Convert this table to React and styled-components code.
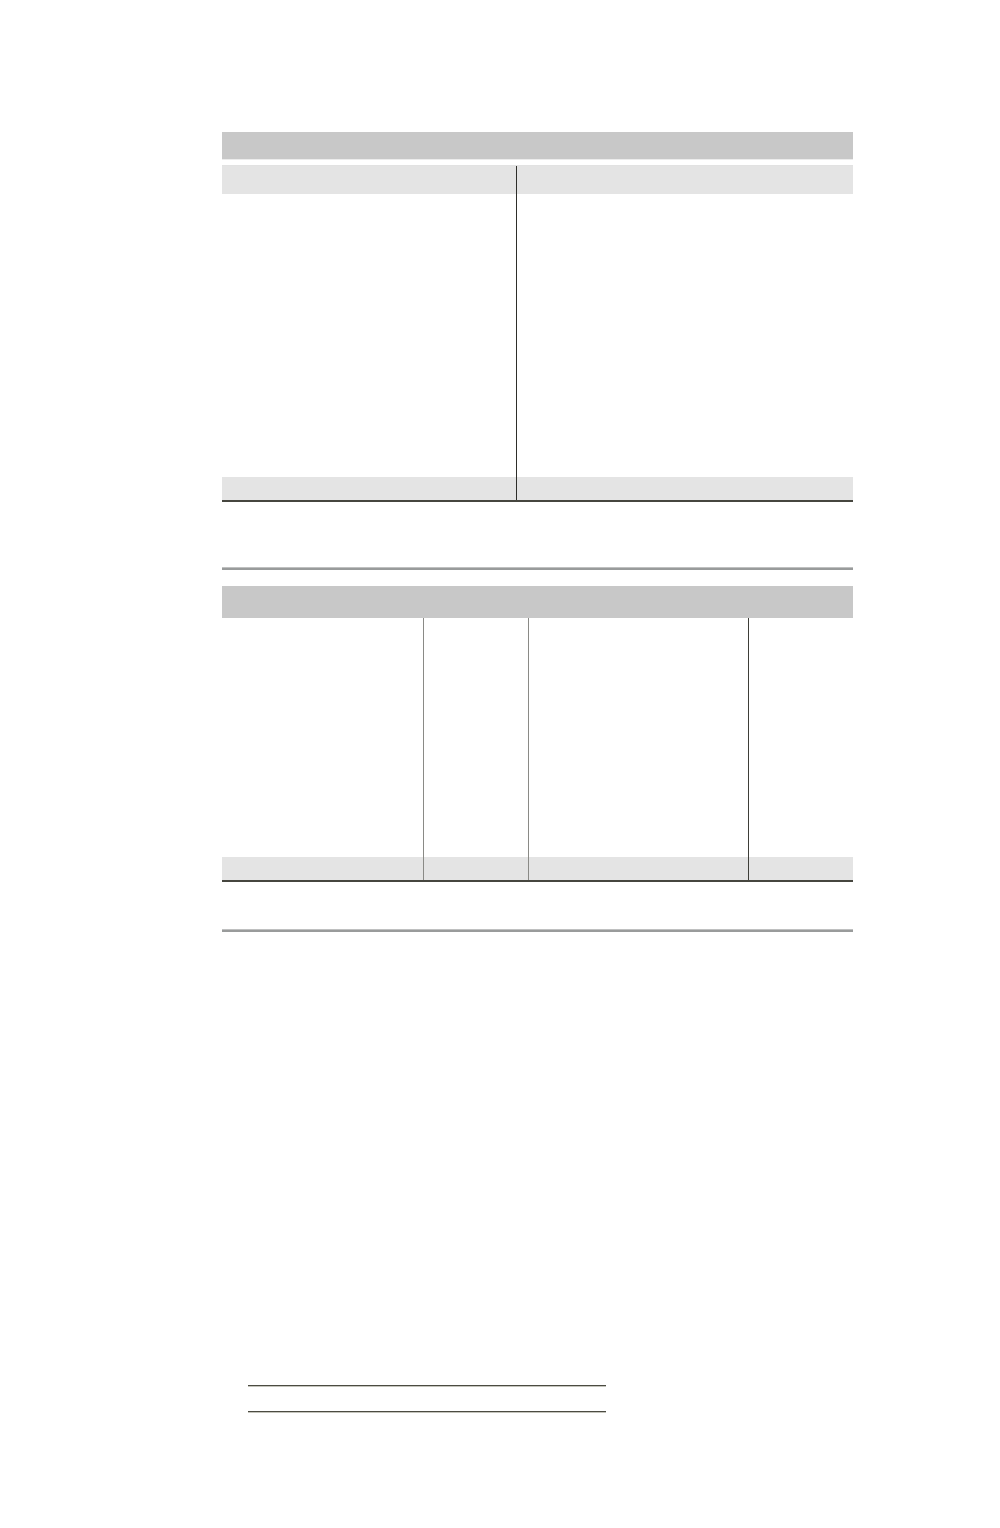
import React from "react";
import styled, { createGlobalStyle } from "styled-components";

const Global = createGlobalStyle`
    body {
        margin: 0;
        background: #ffffff;
        font-family: "Liberation Sans", Arial, sans-serif;
    }
`
const Page = styled.div`
    width: 1000px;
    min-height: 1528px;
    padding: 132px 0 0 222px;
    box-sizing: border-box;
`
const Table = styled.div`
    width: 631px;
    display: flex;
    flex-direction: column;
`
const TitleBar = styled.div`
    height: ${p => p.$h}px;
    background-color: #c8c8c8;
`
const Spacer = styled.div`
    height: ${p => p.$h}px;
    border-top: 1px solid #ececec;
    border-bottom: 1px solid #e2e2e2;
    box-sizing: border-box;
`
const Row = styled.div`
    display: flex;
    height: ${p => p.$h}px;
    background-color: ${p => (p.$shade ? "#e4e4e4" : "#ffffff")};
`
const Cell = styled.div`
    box-sizing: border-box;
    width: ${p => (p.$w ? `${p.$w}px` : "auto")};
    flex: ${p => (p.$w ? "none" : "1")};
    border-right: ${p => (p.$line ? `1px solid ${p.$line}` : "none")};
`
const BottomRule = styled.div`
    height: 2px;
    background-color: #46463f;
`
const GrayRule = styled.div`
    height: 2px;
    margin-top: ${p => p.$mt}px;
    border-top: 1px solid #bfc0c0;
    background-color: #999b9b;
`
const Gap = styled.div`
    height: ${p => p.$h}px;
`
const Signature = styled.div`
    width: 358px;
    margin: 453px 0 0 26px;
    display: flex;
    flex-direction: column;
    gap: 24px;
`
const SignLine = styled.div`
    height: 2px;
    border-top: 1px solid #4b4b42;
    border-bottom: 1px solid #c4c4bc;
    box-sizing: border-box;
`

const cols1 = [
    { w: 295, line: "#2e2e2a" },
    { w: 0 },
];

const cols2 = [
    { w: 202, line: "#8a8a86" },
    { w: 105, line: "#8a8a86" },
    { w: 220, line: "#3e3e38" },
    { w: 0 },
];

const Cells = ({ cols }) =>
    cols.map((c, i) => <Cell key={i} $w={c.w} $line={c.line} />);

const App = () => {
    return (
        <Page>
            <Global />
            <Table>
                <TitleBar $h={27} />
                <Spacer $h={7} />
                <Row $h={28} $shade><Cells cols={cols1} /></Row>
                <Row $h={283}><Cells cols={cols1} /></Row>
                <Row $h={23} $shade><Cells cols={cols1} /></Row>
                <BottomRule />
                <GrayRule $mt={65} />
            </Table>
            <Gap $h={16} />
            <Table>
                <TitleBar $h={32} />
                <Row $h={70}><Cells cols={cols2} /></Row>
                <Row $h={70}><Cells cols={cols2} /></Row>
                <Row $h={69}><Cells cols={cols2} /></Row>
                <Row $h={30}><Cells cols={cols2} /></Row>
                <Row $h={23} $shade><Cells cols={cols2} /></Row>
                <BottomRule />
                <GrayRule $mt={47} />
            </Table>
            <Signature>
                <SignLine />
                <SignLine />
            </Signature>
        </Page>
    );
};

export default App;
